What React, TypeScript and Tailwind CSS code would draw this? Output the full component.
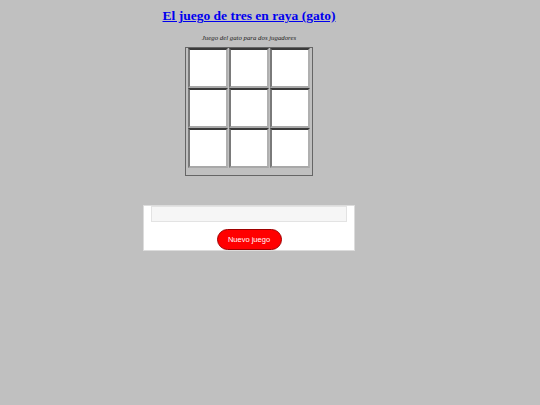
import React from "react";

const cells = Array.from({ length: 9 }, (_, i) => i);

export default function App() {
  return (
    <div className="min-h-[405px] w-full bg-[#c0c0c0]">
      <div className="flex w-[498px] flex-col items-center" style={{ fontFamily: '"Liberation Serif", "Times New Roman", serif' }}>
        <a
          href="#"
          className="mt-[8px] block text-[13.5px] font-bold leading-[16px] text-[#0000ee] underline"
        >
          El juego de tres en raya (gato)
        </a>
        <p className="mt-[10px] text-[6.8px] italic leading-[8px] text-[#222]">
          Juego del gato para dos jugadores
        </p>
        <div className="mt-[5px] box-border h-[129px] w-[128px] border border-[#666] pl-[2px]">
          <div className="grid grid-cols-[40px_40px_40px] gap-x-[1px]">
            {cells.map((i) => (
              <div
                key={i}
                className="box-border h-[40px] border-2 border-t-[#3a3a3a] border-l-[#7a7a7a] border-r-[#b0b0b0] border-b-[#a8a8a8] bg-white"
              />
            ))}
          </div>
        </div>
        <div className="mt-[29px] box-border flex h-[46px] w-[212px] flex-col items-center border border-[#dcdcdc] bg-white">
          <div className="box-border h-[16px] w-[196px] border border-[#e3e3e3] bg-[#f6f6f6]" />
          <button
            className="mt-[7px] box-border flex h-[21px] w-[65px] items-center justify-center rounded-full border border-[#a00000] bg-[#ff0000] text-[7.5px] text-white"
            style={{ fontFamily: '"Liberation Sans", Arial, sans-serif' }}
          >
            Nuevo juego
          </button>
        </div>
      </div>
    </div>
  );
}
